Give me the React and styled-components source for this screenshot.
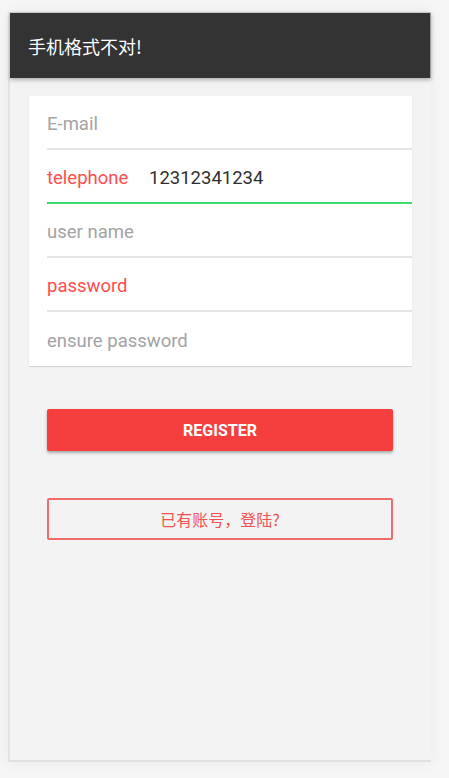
import React from "react";
import styled, { createGlobalStyle } from "styled-components";

const Global = createGlobalStyle`
  html, body { margin: 0; padding: 0; background: #f6f6f6; }
  body { font-family: Roboto, "Noto Sans CJK SC", sans-serif; }
  * { box-sizing: border-box; }
`;

const Page = styled.div`
  width: 449px;
  height: 778px;
  padding: 12px 18px 16px 8px;
  background: #f6f6f6;
`;

const Phone = styled.div`
  width: 423px;
  height: 750px;
  background: #f3f3f3;
  border-left: 2px solid #e2e2e2;
  border-bottom: 2px solid #e0e0e0;
  box-shadow: 0 0 14px rgba(0, 0, 0, 0.06);
  display: flex;
  flex-direction: column;
`;

const Header = styled.header`
  height: 66px;
  background: #333333;
  border-top: 1px solid #c8c8c8;
  border-right: 1px solid #9a9a9a;
  box-shadow: 0 2px 4px rgba(0, 0, 0, 0.28);
  display: flex;
  align-items: center;
  padding: 1px 0 0 18px;
  color: #ffffff;
  font-family: "Noto Sans CJK SC", sans-serif;
  font-size: 18px;
  position: relative;
  z-index: 1;
`;

const Body = styled.main`
  flex: 1;
  padding: 18px 19px 0 19px;
  display: flex;
  flex-direction: column;
`;

const Card = styled.section`
  background: #ffffff;
  box-shadow: 0 1px 1px rgba(0, 0, 0, 0.12);
  display: flex;
  flex-direction: column;
`;

const Row = styled.div`
  height: 54px;
  margin-left: 18px;
  padding-top: 3px;
  display: flex;
  align-items: center;
  border-bottom: ${(p) =>
    p.$last ? "none" : p.$active ? "2px solid #3edc6a" : "2px solid #e6e6e6"};
  font-size: 18.5px;
`;

const Label = styled.span`
  color: ${(p) => (p.$error ? "#ff4d4d" : "#a3a3a3")};
  width: ${(p) => (p.$fixed ? "102px" : "auto")};
`;

const Value = styled.span`
  color: #2f2f2f;
`;

const Actions = styled.div`
  padding: 43px 19px 0 18px;
  display: flex;
  flex-direction: column;
  gap: 47px;
`;

const Button = styled.button`
  height: 42px;
  width: 100%;
  border-radius: 2px;
  font-size: 16px;
  font-family: ${(p) =>
    p.$outline ? '"Noto Sans CJK SC", sans-serif' : "Roboto, sans-serif"};
  font-weight: ${(p) => (p.$outline ? 400 : 700)};
  color: ${(p) => (p.$outline ? "#f05252" : "#ffffff")};
  background: ${(p) => (p.$outline ? "transparent" : "#f53e3e")};
  border: ${(p) => (p.$outline ? "2px solid #f06a6a" : "none")};
  box-shadow: ${(p) => (p.$outline ? "none" : "0 2px 3px rgba(0,0,0,0.3)")};
  padding: 0;
`;

export default function App() {
  return (
    <Page>
      <Global />
      <Phone>
        <Header>手机格式不对!</Header>
        <Body>
          <Card>
            <Row>
              <Label>E-mail</Label>
            </Row>
            <Row $active>
              <Label $error $fixed>telephone</Label>
              <Value>12312341234</Value>
            </Row>
            <Row>
              <Label>user name</Label>
            </Row>
            <Row>
              <Label $error>password</Label>
            </Row>
            <Row $last>
              <Label>ensure password</Label>
            </Row>
          </Card>
          <Actions>
            <Button>REGISTER</Button>
            <Button $outline>已有账号，登陆?</Button>
          </Actions>
        </Body>
      </Phone>
    </Page>
  );
}
